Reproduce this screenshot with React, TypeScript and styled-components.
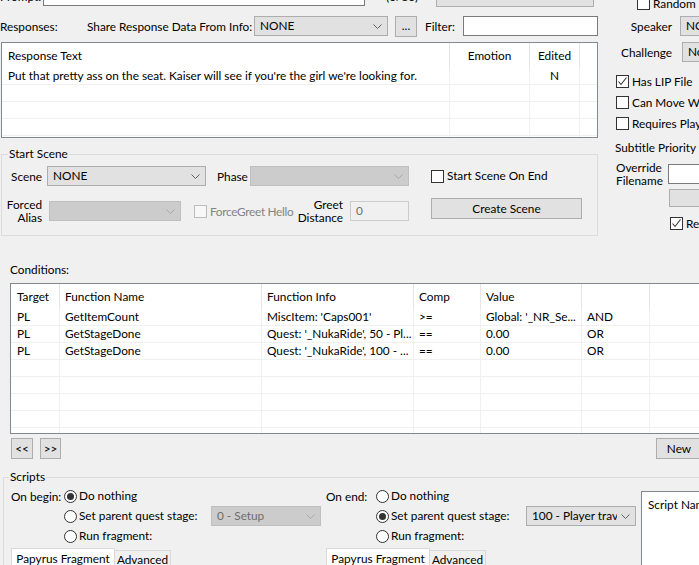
import React from 'react';
import styled, { createGlobalStyle } from 'styled-components';

const GlobalStyle = createGlobalStyle`
  html, body { margin: 0; padding: 0; background: #f0f0f0; overflow: hidden; }
  body { font-family: Lato, "Noto Sans", sans-serif; font-size: 11.8px; color: #000; }
  * { box-sizing: border-box; }
`;

const Screen = styled.div`
  width: 699px;
  height: 565px;
  overflow: hidden;
  background: #f0f0f0;
  font-size: 11.8px;
  line-height: 14px;
`;

const TopArea = styled.div`
  display: flex;
  margin-top: -14px;
`;

const LeftPane = styled.div`
  width: 599px;
  flex: none;
  display: flex;
  flex-direction: column;
`;

const RightPane = styled.div`
  flex: none;
  width: 120px;
  display: flex;
  flex-direction: column;
  align-items: flex-start;
  padding-top: 11px;
`;

const Row = styled.div<{ $mt?: number; $ml?: number; $h?: number }>`
  display: flex;
  align-items: center;
  flex: none;
  margin-top: ${p => p.$mt ?? 0}px;
  margin-left: ${p => p.$ml ?? 0}px;
  height: ${p => (p.$h ? `${p.$h}px` : 'auto')};
`;

const Label = styled.span<{ $w?: number; $ml?: number; $right?: boolean; $muted?: boolean; $tight?: boolean }>`
  flex: none;
  white-space: pre;
  line-height: 13px;
  width: ${p => (p.$w ? `${p.$w}px` : 'auto')};
  margin-left: ${p => p.$ml ?? 0}px;
  text-align: ${p => (p.$right ? 'right' : 'left')};
  color: ${p => (p.$muted ? '#838383' : '#000')};
  letter-spacing: ${p => (p.$tight ? '-0.3px' : 'normal')};
`;

const TextBox = styled.div<{ $w: number; $h?: number; $ml?: number; $disabled?: boolean }>`
  flex: none;
  width: ${p => p.$w}px;
  height: ${p => p.$h ?? 20}px;
  margin-left: ${p => p.$ml ?? 0}px;
  background: ${p => (p.$disabled ? '#f0f0f0' : '#ffffff')};
  border: 1px solid ${p => (p.$disabled ? '#cccccc' : '#7a7a7a')};
  color: #6d6d6d;
  padding-left: 5px;
  display: flex;
  align-items: center;
`;

const ComboFrame = styled.div<{ $w: number; $h: number; $ml: number; $disabled?: boolean }>`
  flex: none;
  width: ${p => p.$w}px;
  height: ${p => p.$h}px;
  margin-left: ${p => p.$ml}px;
  background: ${p => (p.$disabled ? '#cccccc' : '#e1e1e1')};
  border: 1px solid ${p => (p.$disabled ? '#bfbfbf' : '#adadad')};
  color: ${p => (p.$disabled ? '#6d6d6d' : '#000')};
  display: flex;
  align-items: center;
  padding: 0 5px 0 5px;
  gap: 4px;
`;

const ComboText = styled.span`
  flex: 1;
  overflow: hidden;
  white-space: nowrap;
`;

const ChevronSvg = styled.svg`
  flex: none;
`;

type ComboProps = { w: number; h?: number; ml?: number; value?: string; disabled?: boolean };

const Combo = ({ w, h = 20, ml = 0, value = '', disabled }: ComboProps) => (
  <ComboFrame $w={w} $h={h} $ml={ml} $disabled={disabled}>
    <ComboText>{value}</ComboText>
    <ChevronSvg width="9" height="5" viewBox="0 0 9 5">
      <path d="M0.5 0.5 L4.5 4.5 L8.5 0.5" fill="none" stroke={disabled ? '#a8a8a8' : '#606060'} strokeWidth="1" />
    </ChevronSvg>
  </ComboFrame>
);

const PushButton = styled.button<{ $w: number; $h?: number; $ml?: number; $mt?: number; $raise?: boolean }>`
  flex: none;
  width: ${p => p.$w}px;
  height: ${p => p.$h ?? 21}px;
  margin: ${p => p.$mt ?? 0}px 0 0 ${p => p.$ml ?? 0}px;
  align-self: ${p => (p.$raise ? 'flex-start' : 'auto')};
  background: #e1e1e1;
  border: 1px solid #adadad;
  font: inherit;
  line-height: 14px;
  color: #000;
  padding: 0;
  display: flex;
  align-items: center;
  justify-content: center;
`;

const CheckBoxBox = styled.span<{ $disabled?: boolean }>`
  flex: none;
  width: 13px;
  height: 13px;
  border: 1px solid ${p => (p.$disabled ? '#bcbcbc' : '#333333')};
  background: ${p => (p.$disabled ? '#f7f7f7' : '#ffffff')};
  display: flex;
  align-items: center;
  justify-content: center;
`;

const Check = ({ checked, disabled }: { checked?: boolean; disabled?: boolean }) => (
  <CheckBoxBox $disabled={disabled}>
    {checked && (
      <svg width="11" height="11" viewBox="0 0 11 11">
        <path d="M1.5 5.5 L4 8.5 L9.5 1.5" fill="none" stroke="#333" strokeWidth="1.1" />
      </svg>
    )}
  </CheckBoxBox>
);

const CheckField = styled.div<{ $ml?: number; $w?: number; $mt?: number }>`
  flex: none;
  display: flex;
  align-items: center;
  gap: 3px;
  height: 13px;
  margin-left: ${p => p.$ml ?? 0}px;
  margin-top: ${p => p.$mt ?? 0}px;
  width: ${p => (p.$w ? `${p.$w}px` : 'auto')};
  white-space: nowrap;
`;

const RadioCircle = styled.span<{ $on?: boolean }>`
  flex: none;
  width: 13px;
  height: 13px;
  border-radius: 50%;
  border: 1px solid #333333;
  background: #ffffff;
  display: flex;
  align-items: center;
  justify-content: center;
  &::after {
    content: '';
    width: 7px;
    height: 7px;
    border-radius: 50%;
    background: #333333;
    display: ${p => (p.$on ? 'block' : 'none')};
  }
`;

const RadioItem = styled.div<{ $w?: number; $ml?: number }>`
  flex: none;
  display: flex;
  align-items: center;
  gap: 2px;
  width: ${p => (p.$w ? `${p.$w}px` : 'auto')};
  margin-left: ${p => p.$ml ?? 0}px;
  white-space: nowrap;
`;

const ListFrame = styled.div<{ $w: number; $h: number; $mt: number; $ml: number }>`
  flex: none;
  width: ${p => p.$w}px;
  height: ${p => p.$h}px;
  margin: ${p => p.$mt}px 0 0 ${p => p.$ml}px;
  background: #ffffff;
  border: 1px solid #828790;
  overflow: hidden;
`;

const ListHeader = styled.div<{ $cols: string }>`
  display: grid;
  grid-template-columns: ${p => p.$cols};
  height: 25px;
`;

const HeaderCell = styled.div<{ $center?: boolean; $pl?: number; $last?: boolean }>`
  display: flex;
  align-items: center;
  justify-content: ${p => (p.$center ? 'center' : 'flex-start')};
  padding-left: ${p => (p.$center ? 0 : p.$pl ?? 5)}px;
  border-right: ${p => (p.$last ? 'none' : '1px solid #e5e5e5')};
  white-space: nowrap;
  overflow: hidden;
`;

const ListRow = styled.div<{ $cols: string }>`
  display: grid;
  grid-template-columns: ${p => p.$cols};
  height: 17px;
  border-bottom: 1px solid #f0f0f0;
`;

const Cell = styled.div<{ $center?: boolean; $pl?: number; $last?: boolean }>`
  line-height: 16px;
  padding-left: ${p => (p.$center ? 0 : p.$pl ?? 5)}px;
  text-align: ${p => (p.$center ? 'center' : 'left')};
  border-right: ${p => (p.$last ? 'none' : '1px solid #f0f0f0')};
  white-space: nowrap;
  overflow: hidden;
  text-overflow: clip;
`;

const GroupBox = styled.div<{ $w: number; $h: number; $mt: number; $ml: number }>`
  position: relative;
  flex: none;
  width: ${p => p.$w}px;
  height: ${p => p.$h}px;
  margin: ${p => p.$mt}px 0 0 ${p => p.$ml}px;
  border: 1px solid #dcdcdc;
`;

const GroupTitle = styled.span<{ $left: number }>`
  position: absolute;
  top: -8px;
  left: ${p => p.$left}px;
  padding: 0 1px;
  background: #f0f0f0;
  line-height: 14px;
`;

const GroupBody = styled.div<{ $pt: number }>`
  display: flex;
  flex-direction: column;
  padding-top: ${p => p.$pt}px;
`;

const ScriptsBody = styled.div`
  display: flex;
  align-items: flex-start;
`;

const ScriptColumn = styled.div<{ $w: number; $pl: number }>`
  flex: none;
  width: ${p => p.$w}px;
  padding-left: ${p => p.$pl}px;
  padding-top: 8px;
  display: flex;
  flex-direction: column;
`;

const TabStrip = styled.div`
  display: flex;
  align-items: flex-start;
  margin-top: 2px;
  height: 20px;
`;

const Tab = styled.div<{ $w: number; $active?: boolean }>`
  flex: none;
  width: ${p => p.$w}px;
  height: ${p => (p.$active ? 22 : 18)}px;
  margin-top: ${p => (p.$active ? 0 : 2)}px;
  background: ${p => (p.$active ? '#ffffff' : '#f0f0f0')};
  border: 1px solid #d9d9d9;
  border-bottom: none;
  border-left: ${p => (p.$active ? '1px solid #d9d9d9' : 'none')};
  display: flex;
  justify-content: center;
  padding-top: ${p => (p.$active ? 3 : 2)}px;
  white-space: nowrap;
`;

const ScriptNameList = styled.div`
  flex: none;
  width: 80px;
  height: 100px;
  margin-top: 13px;
  background: #ffffff;
  border: 1px solid #828790;
`;

const respCols = '448px 80px 50px 1fr';
const condCols = '49px 202px 152px 67px 101px 68px 1fr';

const conditions = [
  ['PL', 'GetItemCount', "MiscItem: 'Caps001'", '>=', "Global: '_NR_Se...", 'AND'],
  ['PL', 'GetStageDone', "Quest: '_NukaRide', 50 - Pl...", '==', '0.00', 'OR'],
  ['PL', 'GetStageDone', "Quest: '_NukaRide', 100 - ...", '==', '0.00', 'OR'],
  ['', '', '', '', '', ''],
  ['', '', '', '', '', ''],
  ['', '', '', '', '', ''],
  ['', '', '', '', '', ''],
  ['', '', '', '', '', ''],
];

export default function App() {
  return (
    <>
      <GlobalStyle />
      <Screen>
        <TopArea>
          <LeftPane>
            <Row $h={20}>
              <Label $w={43}>Prompt:</Label>
              <TextBox $w={322} />
              <Label $ml={21} $w={50}>(0/80)</Label>
              <Combo w={158} h={21} value="Custom" />
            </Row>
            <Row $h={20} $mt={10}>
              <Label $w={87}>Responses:</Label>
              <Label $w={167}>Share Response Data From Info:</Label>
              <Combo w={134} value="NONE" />
              <PushButton $w={22} $h={21} $ml={7}>...</PushButton>
              <Label $ml={8} $w={38}>Filter:</Label>
              <TextBox $w={135} />
            </Row>
            <ListFrame $w={597} $h={96} $mt={6} $ml={1}>
              <ListHeader $cols={respCols}>
                <HeaderCell $pl={6}>Response Text</HeaderCell>
                <HeaderCell $center>Emotion</HeaderCell>
                <HeaderCell $center>Edited</HeaderCell>
                <HeaderCell $last />
              </ListHeader>
              <ListRow $cols={respCols}>
                <Cell $pl={6}>Put that pretty ass on the seat. Kaiser will see if you're the girl we're looking for.</Cell>
                <Cell />
                <Cell $center>N</Cell>
                <Cell $last />
              </ListRow>
              {[0, 1, 2, 3].map(i => (
                <ListRow key={i} $cols={respCols}>
                  <Cell />
                  <Cell />
                  <Cell />
                  <Cell $last />
                </ListRow>
              ))}
            </ListFrame>
            <GroupBox $w={597} $h={82} $mt={16} $ml={1}>
              <GroupTitle $left={6}>Start Scene</GroupTitle>
              <GroupBody $pt={11}>
                <Row $h={20}>
                  <Label $w={40} $right>Scene</Label>
                  <Combo w={159} ml={5} value="NONE" />
                  <Label $ml={11} $w={33}>Phase</Label>
                  <Combo w={159} disabled />
                  <CheckField $ml={22}>
                    <Check />
                    <span>Start Scene On End</span>
                  </CheckField>
                </Row>
                <Row $h={20} $mt={15}>
                  <Label $w={40} $right>{'Forced\nAlias'}</Label>
                  <Combo w={132} ml={7} disabled />
                  <CheckField $ml={13} $w={102}>
                    <Check disabled />
                    <Label $muted $tight>ForceGreet Hello</Label>
                  </CheckField>
                  <Label $w={47} $right>{'Greet\nDistance'}</Label>
                  <TextBox $w={59} $ml={7} $disabled>0</TextBox>
                  <PushButton $w={151} $h={21} $ml={22} $mt={-3} $raise>Create Scene</PushButton>
                </Row>
              </GroupBody>
            </GroupBox>
          </LeftPane>
          <RightPane>
            <CheckField $ml={38}>
              <Check />
              <span>Random End</span>
            </CheckField>
            <Row $h={20} $mt={6}>
              <Label $w={73} $right>Speaker</Label>
              <Combo w={60} ml={8} value="NONE" />
            </Row>
            <Row $h={20} $mt={6}>
              <Label $w={73} $right>Challenge</Label>
              <Combo w={60} ml={10} value="None" />
            </Row>
            <CheckField $ml={17} $mt={13}>
              <Check checked />
              <Label $w={64}>Has LIP File</Label>
              <Check />
            </CheckField>
            <CheckField $ml={17} $mt={8}>
              <Check />
              <span>Can Move While Talking</span>
            </CheckField>
            <CheckField $ml={17} $mt={8}>
              <Check />
              <span>Requires Player Activation</span>
            </CheckField>
            <Row $h={14} $mt={10} $ml={16}>
              <Label>Subtitle Priority</Label>
            </Row>
            <Row $h={20} $mt={10} $ml={17}>
              <Label $w={52}>{'Override\nFilename'}</Label>
              <TextBox $w={40} />
            </Row>
            <PushButton $w={40} $h={18} $ml={70} $mt={5} />
            <CheckField $ml={71} $mt={10}>
              <Check checked />
              <span>Re</span>
            </CheckField>
          </RightPane>
        </TopArea>

        <Row $h={14} $mt={26} $ml={10}>
          <Label>Conditions:</Label>
        </Row>
        <ListFrame $w={700} $h={151} $mt={7} $ml={10}>
          <ListHeader $cols={condCols}>
            <HeaderCell $pl={6}>Target</HeaderCell>
            <HeaderCell>Function Name</HeaderCell>
            <HeaderCell>Function Info</HeaderCell>
            <HeaderCell>Comp</HeaderCell>
            <HeaderCell>Value</HeaderCell>
            <HeaderCell />
            <HeaderCell $last />
          </ListHeader>
          {conditions.map((r, i) => (
            <ListRow key={i} $cols={condCols}>
              <Cell $pl={6}>{r[0]}</Cell>
              <Cell>{r[1]}</Cell>
              <Cell>{r[2]}</Cell>
              <Cell>{r[3]}</Cell>
              <Cell>{r[4]}</Cell>
              <Cell>{r[5]}</Cell>
              <Cell $last />
            </ListRow>
          ))}
        </ListFrame>
        <Row $h={21} $mt={4}>
          <PushButton $w={22} $ml={11}>&lt;&lt;</PushButton>
          <PushButton $w={21} $ml={7}>&gt;&gt;</PushButton>
          <PushButton $w={46} $ml={595}>New</PushButton>
        </Row>

        <GroupBox $w={720} $h={120} $mt={18} $ml={3}>
          <GroupTitle $left={5}>Scripts</GroupTitle>
          <ScriptsBody>
            <ScriptColumn $w={318} $pl={7}>
              <Row $h={20}>
                <Label $w={53}>On begin:</Label>
                <RadioItem>
                  <RadioCircle $on />
                  <span>Do nothing</span>
                </RadioItem>
              </Row>
              <Row $h={20}>
                <RadioItem $ml={53} $w={147}>
                  <RadioCircle />
                  <span>Set parent quest stage:</span>
                </RadioItem>
                <Combo w={110} disabled value="0 - Setup" />
              </Row>
              <Row $h={20}>
                <RadioItem $ml={53}>
                  <RadioCircle />
                  <span>Run fragment:</span>
                </RadioItem>
              </Row>
              <TabStrip>
                <Tab $w={104} $active>Papyrus Fragment</Tab>
                <Tab $w={56}>Advanced</Tab>
              </TabStrip>
            </ScriptColumn>
            <ScriptColumn $w={319} $pl={4}>
              <Row $h={20}>
                <Label $w={50}>On end:</Label>
                <RadioItem>
                  <RadioCircle />
                  <span>Do nothing</span>
                </RadioItem>
              </Row>
              <Row $h={20}>
                <RadioItem $ml={50} $w={150}>
                  <RadioCircle $on />
                  <span>Set parent quest stage:</span>
                </RadioItem>
                <Combo w={110} value="100 - Player trave" />
              </Row>
              <Row $h={20}>
                <RadioItem $ml={50}>
                  <RadioCircle />
                  <span>Run fragment:</span>
                </RadioItem>
              </Row>
              <TabStrip>
                <Tab $w={104} $active>Papyrus Fragment</Tab>
                <Tab $w={56}>Advanced</Tab>
              </TabStrip>
            </ScriptColumn>
            <ScriptNameList>
              <ListHeader $cols="1fr">
                <HeaderCell $pl={6} $last>Script Name</HeaderCell>
              </ListHeader>
            </ScriptNameList>
          </ScriptsBody>
        </GroupBox>
      </Screen>
    </>
  );
}
